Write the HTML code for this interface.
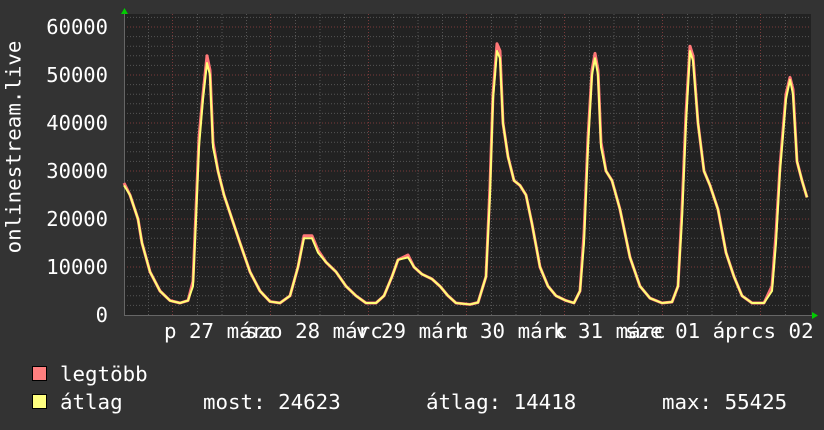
<!DOCTYPE html>
<html><head><meta charset="utf-8"><style>
html,body{margin:0;padding:0;background:#333;}
body{width:824px;height:430px;overflow:hidden;position:relative;font-family:"DejaVu Sans Mono","Liberation Mono",monospace;color:#fff;}
.t{position:absolute;font-size:20.8px;line-height:1;white-space:pre;}
.yl{position:absolute;right:716px;font-size:20.5px;line-height:1;text-align:right;}
.sq{position:absolute;width:13px;height:13px;border:1px solid #000;}
</style></head><body>
<svg width="824" height="430" style="position:absolute;left:0;top:0">
<rect x="124" y="14" width="687" height="301" fill="#222"/>
<g stroke="#555" stroke-width="1" stroke-dasharray="1,2">
<line x1="124" x2="811" y1="305.4" y2="305.4"/><line x1="124" x2="811" y1="295.8" y2="295.8"/><line x1="124" x2="811" y1="286.2" y2="286.2"/><line x1="124" x2="811" y1="276.6" y2="276.6"/>
<line x1="124" x2="811" y1="257.4" y2="257.4"/><line x1="124" x2="811" y1="247.8" y2="247.8"/><line x1="124" x2="811" y1="238.2" y2="238.2"/><line x1="124" x2="811" y1="228.6" y2="228.6"/>
<line x1="124" x2="811" y1="209.4" y2="209.4"/><line x1="124" x2="811" y1="199.8" y2="199.8"/><line x1="124" x2="811" y1="190.2" y2="190.2"/><line x1="124" x2="811" y1="180.6" y2="180.6"/>
<line x1="124" x2="811" y1="161.4" y2="161.4"/><line x1="124" x2="811" y1="151.8" y2="151.8"/><line x1="124" x2="811" y1="142.2" y2="142.2"/><line x1="124" x2="811" y1="132.6" y2="132.6"/>
<line x1="124" x2="811" y1="113.4" y2="113.4"/><line x1="124" x2="811" y1="103.8" y2="103.8"/><line x1="124" x2="811" y1="94.2" y2="94.2"/><line x1="124" x2="811" y1="84.6" y2="84.6"/>
<line x1="124" x2="811" y1="65.4" y2="65.4"/><line x1="124" x2="811" y1="55.8" y2="55.8"/><line x1="124" x2="811" y1="46.2" y2="46.2"/><line x1="124" x2="811" y1="36.6" y2="36.6"/>
<line x1="124" x2="811" y1="17.4" y2="17.4"/>
<line y1="14" y2="315" x1="148.5" x2="148.5"/><line y1="14" y2="315" x1="197.5" x2="197.5"/><line y1="14" y2="315" x1="222" x2="222"/><line y1="14" y2="315" x1="246.5" x2="246.5"/>
<line y1="14" y2="315" x1="295.5" x2="295.5"/><line y1="14" y2="315" x1="320" x2="320"/><line y1="14" y2="315" x1="344.5" x2="344.5"/>
<line y1="14" y2="315" x1="393.5" x2="393.5"/><line y1="14" y2="315" x1="418" x2="418"/><line y1="14" y2="315" x1="442.5" x2="442.5"/>
<line y1="14" y2="315" x1="491.5" x2="491.5"/><line y1="14" y2="315" x1="516" x2="516"/><line y1="14" y2="315" x1="540.5" x2="540.5"/>
<line y1="14" y2="315" x1="589.5" x2="589.5"/><line y1="14" y2="315" x1="614" x2="614"/><line y1="14" y2="315" x1="638.5" x2="638.5"/>
<line y1="14" y2="315" x1="687.5" x2="687.5"/><line y1="14" y2="315" x1="712" x2="712"/><line y1="14" y2="315" x1="736.5" x2="736.5"/>
<line y1="14" y2="315" x1="785.5" x2="785.5"/>
</g>
<g stroke="#7a3a3a" stroke-width="1" stroke-dasharray="1,2">
<line x1="124" x2="811" y1="267" y2="267"/><line x1="124" x2="811" y1="219" y2="219"/><line x1="124" x2="811" y1="171" y2="171"/><line x1="124" x2="811" y1="123" y2="123"/><line x1="124" x2="811" y1="75" y2="75"/><line x1="124" x2="811" y1="27" y2="27"/>
<line y1="14" y2="315" x1="172.5" x2="172.5"/><line y1="14" y2="315" x1="270.5" x2="270.5"/><line y1="14" y2="315" x1="368.5" x2="368.5"/><line y1="14" y2="315" x1="466.5" x2="466.5"/><line y1="14" y2="315" x1="564.5" x2="564.5"/><line y1="14" y2="315" x1="662.5" x2="662.5"/><line y1="14" y2="315" x1="760.5" x2="760.5"/>
</g>
<line x1="124" x2="816" y1="315.5" y2="315.5" stroke="#666"/>
<line x1="124.5" x2="124.5" y1="10" y2="315" stroke="#666"/>
<polygon points="121,14 124.5,8 128,14" fill="#0c0"/>
<polygon points="812,312 818,315.5 812,319" fill="#0c0"/>
<g transform="translate(0,315) scale(1,-0.0048)" fill="none" stroke-linejoin="round">
<polyline vector-effect="non-scaling-stroke" stroke="#ff7777" stroke-width="3" points="124,27500 130,25000 138,20000 142,15000 150,9000 160,5000 170,3000 180,2500 188,3000 193,7000 196,22000 199,37000 203,46000 207,54000 210,51000 213,36000 218,30000 224,25000 232,20000 240,15000 250,9000 260,5000 270,2800 280,2500 290,4000 298,10000 304,16500 312,16500 318,13500 326,11000 336,9000 346,6000 356,4000 366,2500 376,2500 384,4000 392,8000 398,11500 408,12500 414,10000 422,8500 432,7500 440,6000 448,4000 456,2500 470,2200 478,2600 486,8000 490,27000 493,46000 497,56500 500,55000 503,40000 508,33000 514,28000 520,27000 526,25000 532,19000 540,10000 548,6000 556,4000 566,3000 574,2500 580,5000 584,17000 588,37000 592,51000 595,54500 598,51000 601,36000 606,30000 612,28000 620,22000 630,12000 640,6000 650,3500 662,2500 672,2700 678,6000 682,22000 686,42000 690,56000 693,54000 698,40000 704,30000 710,27000 718,22000 726,13000 734,8000 742,4000 752,2500 764,2500 772,6000 776,17000 780,31000 786,46000 790,49500 793,47000 797,32000 802,28000 807,24500"/>
<polyline vector-effect="non-scaling-stroke" stroke="#ffff77" stroke-width="2" points="124,27000 130,25000 138,20000 142,15000 150,9000 160,5000 170,3000 180,2500 188,3000 193,6000 196,20000 199,35000 203,45000 207,52500 210,50000 213,35000 218,30000 224,25000 232,20000 240,15000 250,9000 260,5000 270,2800 280,2500 290,4000 298,10000 304,16000 312,16000 318,13000 326,11000 336,9000 346,6000 356,4000 366,2500 376,2500 384,4000 392,8000 398,11500 408,12000 414,10000 422,8500 432,7500 440,6000 448,4000 456,2500 470,2200 478,2600 486,8000 490,25000 493,45000 497,55000 500,53500 503,40000 508,33000 514,28000 520,27000 526,25000 532,19000 540,10000 548,6000 556,4000 566,3000 574,2500 580,5000 584,15000 588,35000 592,50000 595,53500 598,50000 601,35000 606,30000 612,28000 620,22000 630,12000 640,6000 650,3500 662,2500 672,2700 678,6000 682,20000 686,40000 690,55000 693,53000 698,40000 704,30000 710,27000 718,22000 726,13000 734,8000 742,4000 752,2500 764,2500 772,5000 776,15000 780,30000 786,45000 790,49000 793,46000 797,32000 802,28000 807,24500"/>
</g>
</svg>
<div class="yl" style="top:17px">60000</div>
<div class="yl" style="top:65px">50000</div>
<div class="yl" style="top:113px">40000</div>
<div class="yl" style="top:161px">30000</div>
<div class="yl" style="top:209px">20000</div>
<div class="yl" style="top:257px">10000</div>
<div class="yl" style="top:305px">0</div>
<div class="t" style="left:-74px;top:155px;transform:rotate(-90deg);width:176px;text-align:center">onlinestream.live</div>
<div class="t" style="left:164px;top:321px">p 27 márc</div>
<div class="t" style="left:245px;top:321px">szo 28 márc</div>
<div class="t" style="left:356px;top:321px">v 29 márc</div>
<div class="t" style="left:455px;top:321px">h 30 márc</div>
<div class="t" style="left:553px;top:321px">k 31 márc</div>
<div class="t" style="left:625px;top:321px">sze 01 ápr</div>
<div class="t" style="left:751px;top:321px">cs 02</div>
<div class="sq" style="left:32px;top:366px;background:#ff7f7f"></div>
<div class="sq" style="left:32px;top:394px;background:#ffff7f"></div>
<div class="t" style="left:60px;top:364px">legtöbb</div>
<div class="t" style="left:60px;top:392px">átlag</div>
<div class="t" style="left:203px;top:392px">most: 24623</div>
<div class="t" style="left:426px;top:392px">átlag: 14418</div>
<div class="t" style="left:662px;top:392px">max: 55425</div>
</body></html>
